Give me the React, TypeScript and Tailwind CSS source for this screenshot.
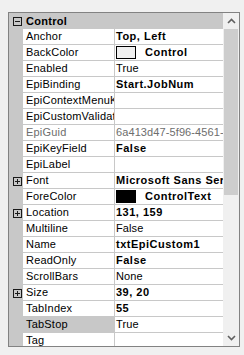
import React from 'react';

type Row = {
  name: string;
  value: string;
  bold?: boolean;
  expand?: boolean;
  swatch?: 'light' | 'dark';
  dim?: boolean;
  selected?: boolean;
};

const rows: Row[] = [
  { name: 'Anchor', value: 'Top, Left', bold: true },
  { name: 'BackColor', value: 'Control', bold: true, swatch: 'light' },
  { name: 'Enabled', value: 'True' },
  { name: 'EpiBinding', value: 'Start.JobNum', bold: true },
  { name: 'EpiContextMenuKey', value: '' },
  { name: 'EpiCustomValidation', value: '' },
  { name: 'EpiGuid', value: '6a413d47-5f96-4561-a8c2-000000000000', dim: true },
  { name: 'EpiKeyField', value: 'False', bold: true },
  { name: 'EpiLabel', value: '' },
  { name: 'Font', value: 'Microsoft Sans Serif, 8.25pt', bold: true, expand: true },
  { name: 'ForeColor', value: 'ControlText', bold: true, swatch: 'dark' },
  { name: 'Location', value: '131, 159', bold: true, expand: true },
  { name: 'Multiline', value: 'False' },
  { name: 'Name', value: 'txtEpiCustom1', bold: true },
  { name: 'ReadOnly', value: 'False', bold: true },
  { name: 'ScrollBars', value: 'None' },
  { name: 'Size', value: '39, 20', bold: true, expand: true },
  { name: 'TabIndex', value: '55', bold: true },
  { name: 'TabStop', value: 'True', selected: true },
  { name: 'Tag', value: '' },
];

function Box({ plus }: { plus?: boolean }) {
  return (
    <svg width="9" height="9" viewBox="0 0 9 9" className="block">
      <rect x="0.5" y="0.5" width="8" height="8" fill="none" stroke="#1a1a1a" />
      <line x1="2" y1="4.5" x2="7" y2="4.5" stroke="#1a1a1a" />
      {plus && <line x1="4.5" y1="2" x2="4.5" y2="7" stroke="#1a1a1a" />}
    </svg>
  );
}

export default function App() {
  return (
    <div className="h-[355px] w-[244px] bg-[#f0f0f0] pl-[8px] pt-[12px] text-[11px] text-black" style={{ fontFamily: '"Liberation Sans", Arial, sans-serif' }}>
      <div className="flex h-[335px] w-[232px] border border-[#828282] bg-white">
        <div className="w-[214px] overflow-hidden">
          {/* category header */}
          <div className="flex h-[16px] items-center bg-[#c8c8c8]">
            <div className="flex w-[14px] justify-center pl-[2px]">
              <Box />
            </div>
            <span className="pl-[3px] font-bold leading-[16px] tracking-[0.3px]">Control</span>
          </div>
          {rows.map((r) => (
            <div key={r.name} className="flex h-[16px]">
              <div className="flex w-[14px] shrink-0 items-center justify-center bg-[#c8c8c8] pl-[2px]">
                {r.expand && <Box plus />}
              </div>
              <div
                className={`w-[91px] shrink-0 overflow-hidden whitespace-nowrap border-b border-[#c8c8c8] pl-[3px] leading-[15px] tracking-[0.2px] ${
                  r.selected ? 'bg-[#c8c8c8]' : ''
                } ${r.dim ? 'text-[#6d6d6d]' : ''}`}
              >
                {r.name}
              </div>
              <div className="w-[1px] shrink-0 bg-[#c8c8c8]" />
              <div
                className={`flex w-[108px] shrink-0 items-start overflow-hidden whitespace-nowrap border-b border-[#c8c8c8] pl-[1px] leading-[15px] ${
                  r.bold ? 'font-bold tracking-[0.5px]' : 'tracking-[0.1px]'
                } ${r.dim ? 'text-[#6d6d6d]' : ''}`}
              >
                {r.swatch && (
                  <span
                    className={`mr-[9px] mt-[1px] inline-block h-[13px] w-[20px] shrink-0 border border-black ${
                      r.swatch === 'dark' ? 'bg-black' : 'bg-[#f0f0f0]'
                    }`}
                  />
                )}
                <span>{r.value}</span>
              </div>
            </div>
          ))}
        </div>
        {/* scrollbar */}
        <div className="flex w-[16px] flex-col items-center bg-[#f0f0f0]">
          <div className="flex h-[16px] w-full items-center justify-center">
            <svg width="9" height="6" viewBox="0 0 9 6">
              <path d="M1 5 L4.5 1.5 L8 5" fill="none" stroke="#606060" strokeWidth="1.6" />
            </svg>
          </div>
          <div className="h-[166px] w-[14px] bg-[#cdcdcd]" />
          <div className="flex-1" />
          <div className="flex h-[17px] w-full items-center justify-center">
            <svg width="9" height="6" viewBox="0 0 9 6">
              <path d="M1 1 L4.5 4.5 L8 1" fill="none" stroke="#606060" strokeWidth="1.6" />
            </svg>
          </div>
        </div>
      </div>
    </div>
  );
}
